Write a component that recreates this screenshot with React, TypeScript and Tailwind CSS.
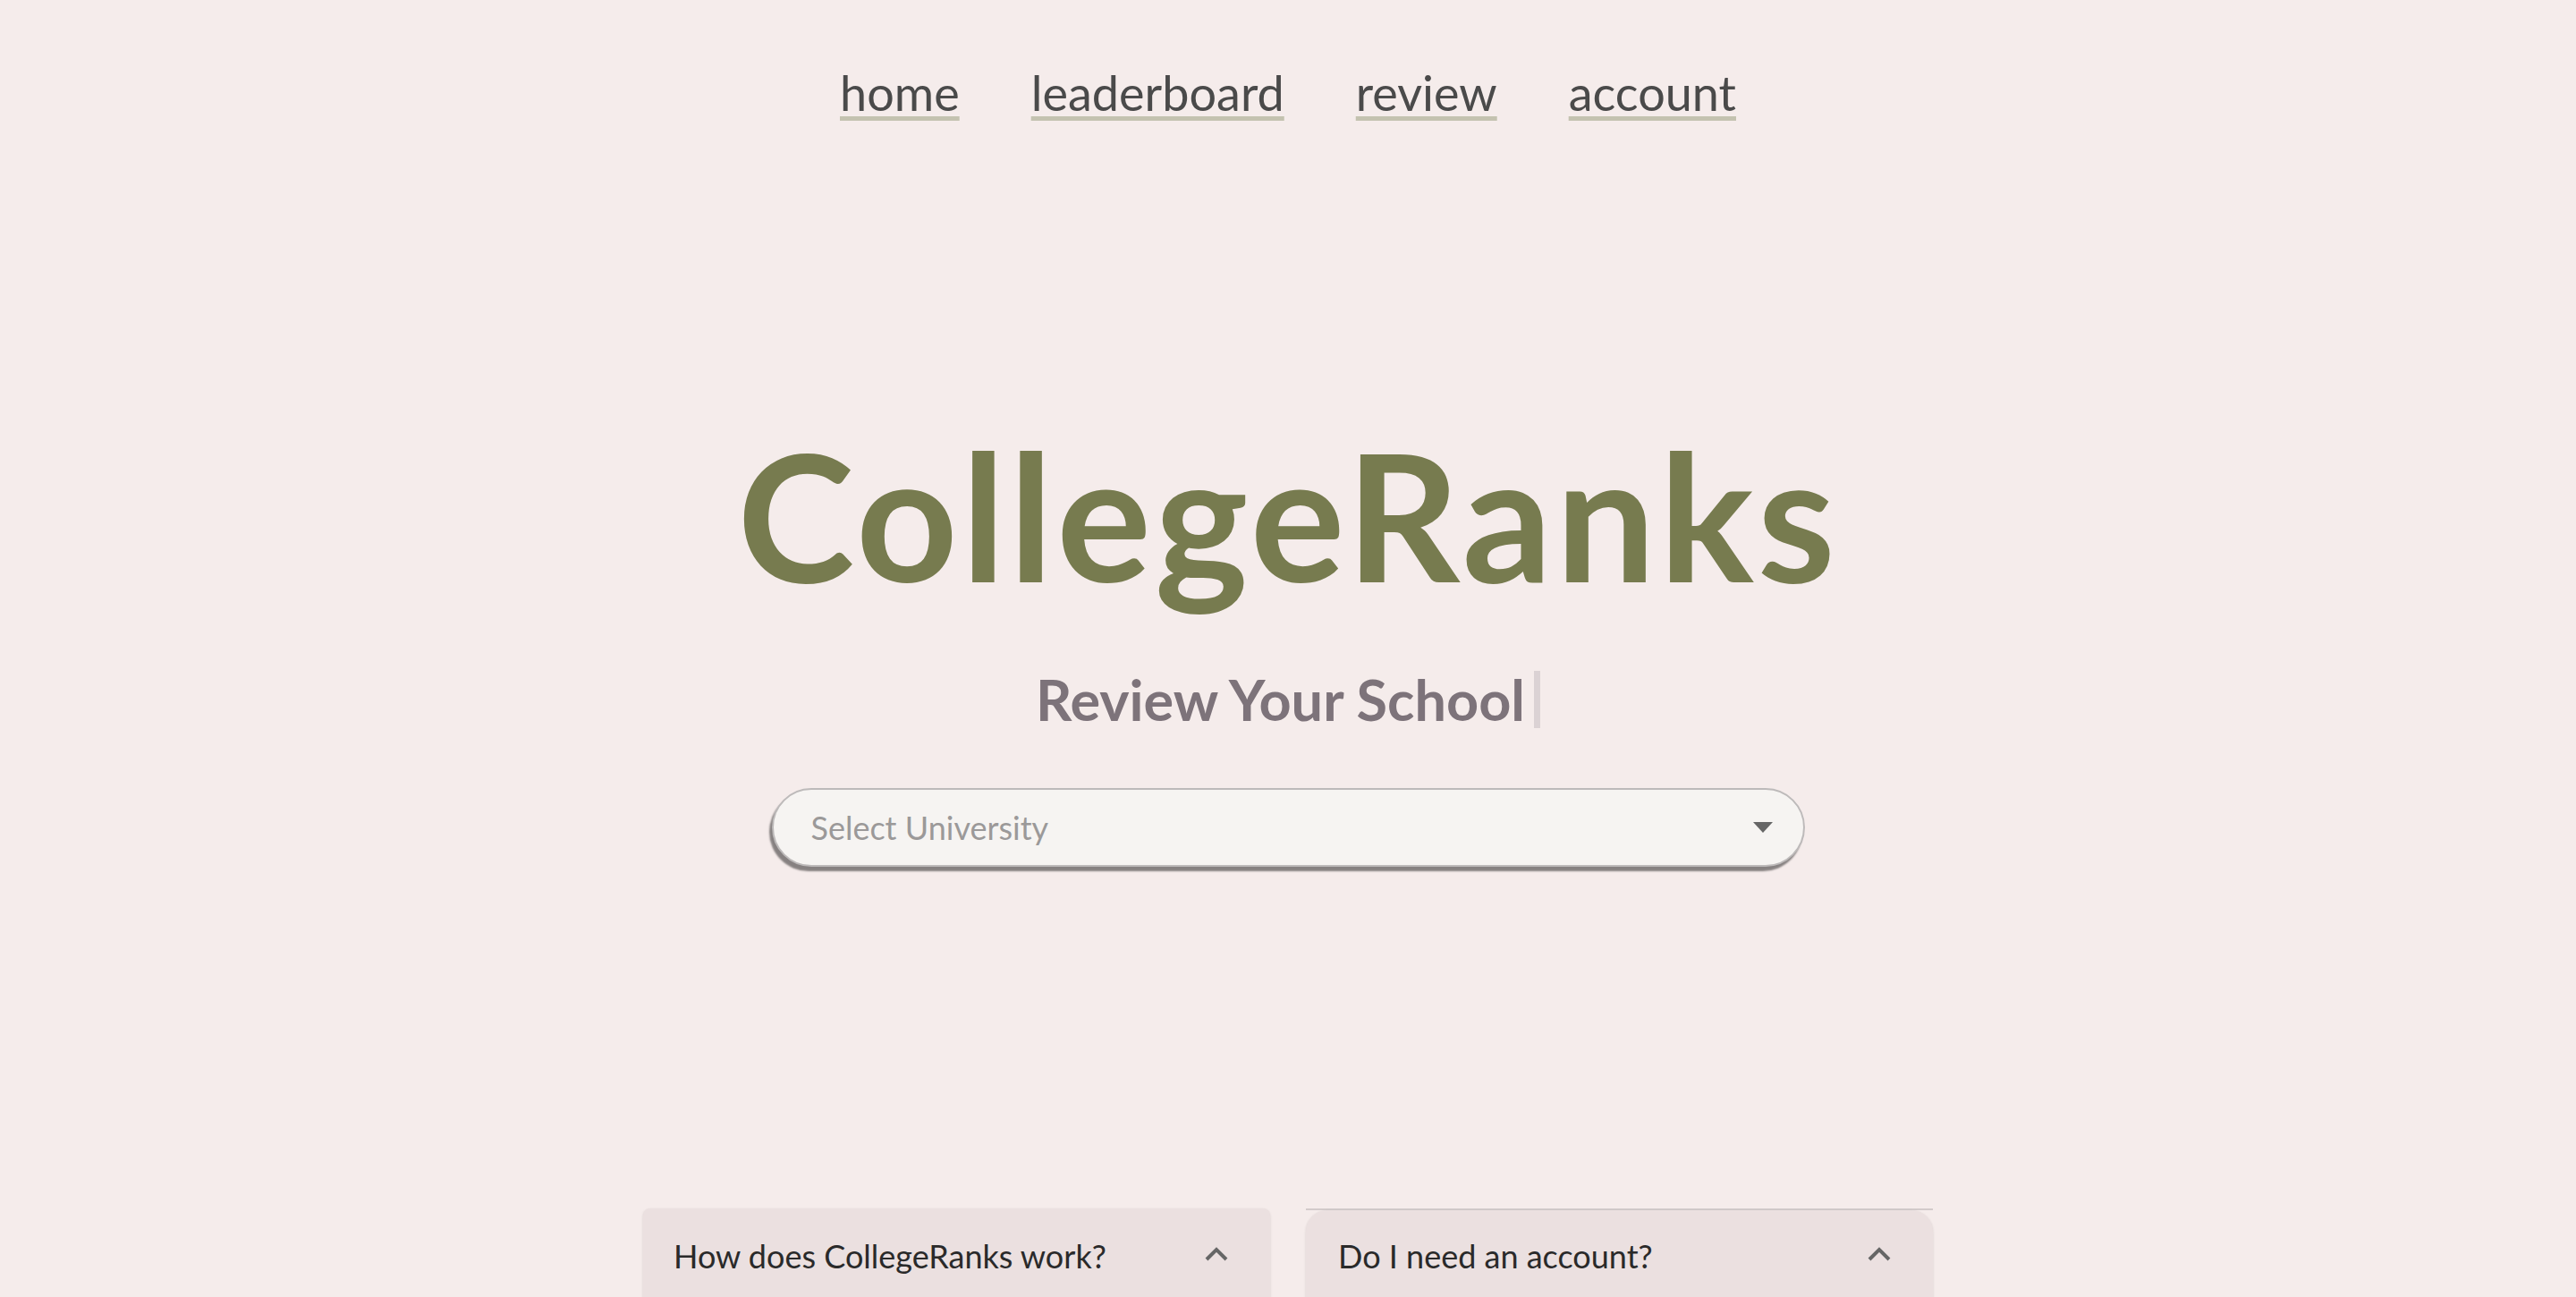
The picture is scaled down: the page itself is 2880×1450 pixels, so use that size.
import React from "react";

const links = ["home", "leaderboard", "review", "account"];

const faqs = ["How does CollegeRanks work?", "Do I need an account?"];

function ChevronUp() {
  return (
    <svg width="28" height="18" viewBox="0 0 28 18" fill="none">
      <path d="M3 15 L14 4 L25 15" stroke="#666" strokeWidth="4" />
    </svg>
  );
}

export default function App() {
  return (
    <div className="h-[1450px] bg-[#f5eceb] font-['Lato',sans-serif] overflow-hidden">
      <nav className="flex justify-center gap-[80px] pt-[74px]">
        {links.map((l) => (
          <a
            key={l}
            href="#"
            className="text-[54px] leading-[60px] font-normal text-[#4a4a4a] underline decoration-[#c4c2b0] decoration-[5px] underline-offset-[6px]"
          >
            {l}
          </a>
        ))}
      </nav>

      <main className="flex flex-col items-center">
        <h1 className="mt-[341px] text-[198px] leading-[200px] font-bold text-[#777b4f] tracking-[4px]">
          CollegeRanks
        </h1>
        <div className="mt-[72px] flex items-center text-[63px] leading-[70px] font-bold text-[#7d737a]">
          <span>Review Your School</span>
          <span className="ml-[10px] h-[64px] w-[7px] bg-[#dbd2d4]" />
        </div>

        <div className="mt-[64px] flex h-[88px] w-[1155px] items-center justify-between rounded-full border-2 border-[#bdbaba] bg-[#f6f4f2] pl-[42px] pr-[34px] shadow-[-3px_5px_2px_rgba(0,0,0,0.45)]">
          <span className="text-[36px] text-[#9b9999]">Select University</span>
          <span className="h-0 w-0 border-x-[11px] border-t-[12px] border-x-transparent border-t-[#666]" />
        </div>
      </main>

      <section className="mx-auto mt-[382px] grid w-[1442px] grid-cols-2 gap-[40px]">
        {faqs.map((q, i) => (
          <div key={q} className="relative">
            {i === 1 && <div className="h-[2px] bg-[#d3cbcb]" />}
            <div
              className={
                i === 0
                  ? "flex h-[200px] items-start justify-between rounded-t-[8px] bg-[#ebe0e0] pl-[34px] pr-[46px] pt-[28px] shadow-[0_1px_3px_rgba(0,0,0,0.12)]"
                  : "flex h-[200px] items-start justify-between rounded-t-[24px] bg-[#ebe0e0] pl-[36px] pr-[46px] pt-[26px] shadow-[0_1px_3px_rgba(0,0,0,0.12)]"
              }
            >
              <span className="text-[36px] leading-[50px] text-[#2a2a2a]">{q}</span>
              <span className="mt-[14px]">
                <ChevronUp />
              </span>
            </div>
          </div>
        ))}
      </section>
    </div>
  );
}
